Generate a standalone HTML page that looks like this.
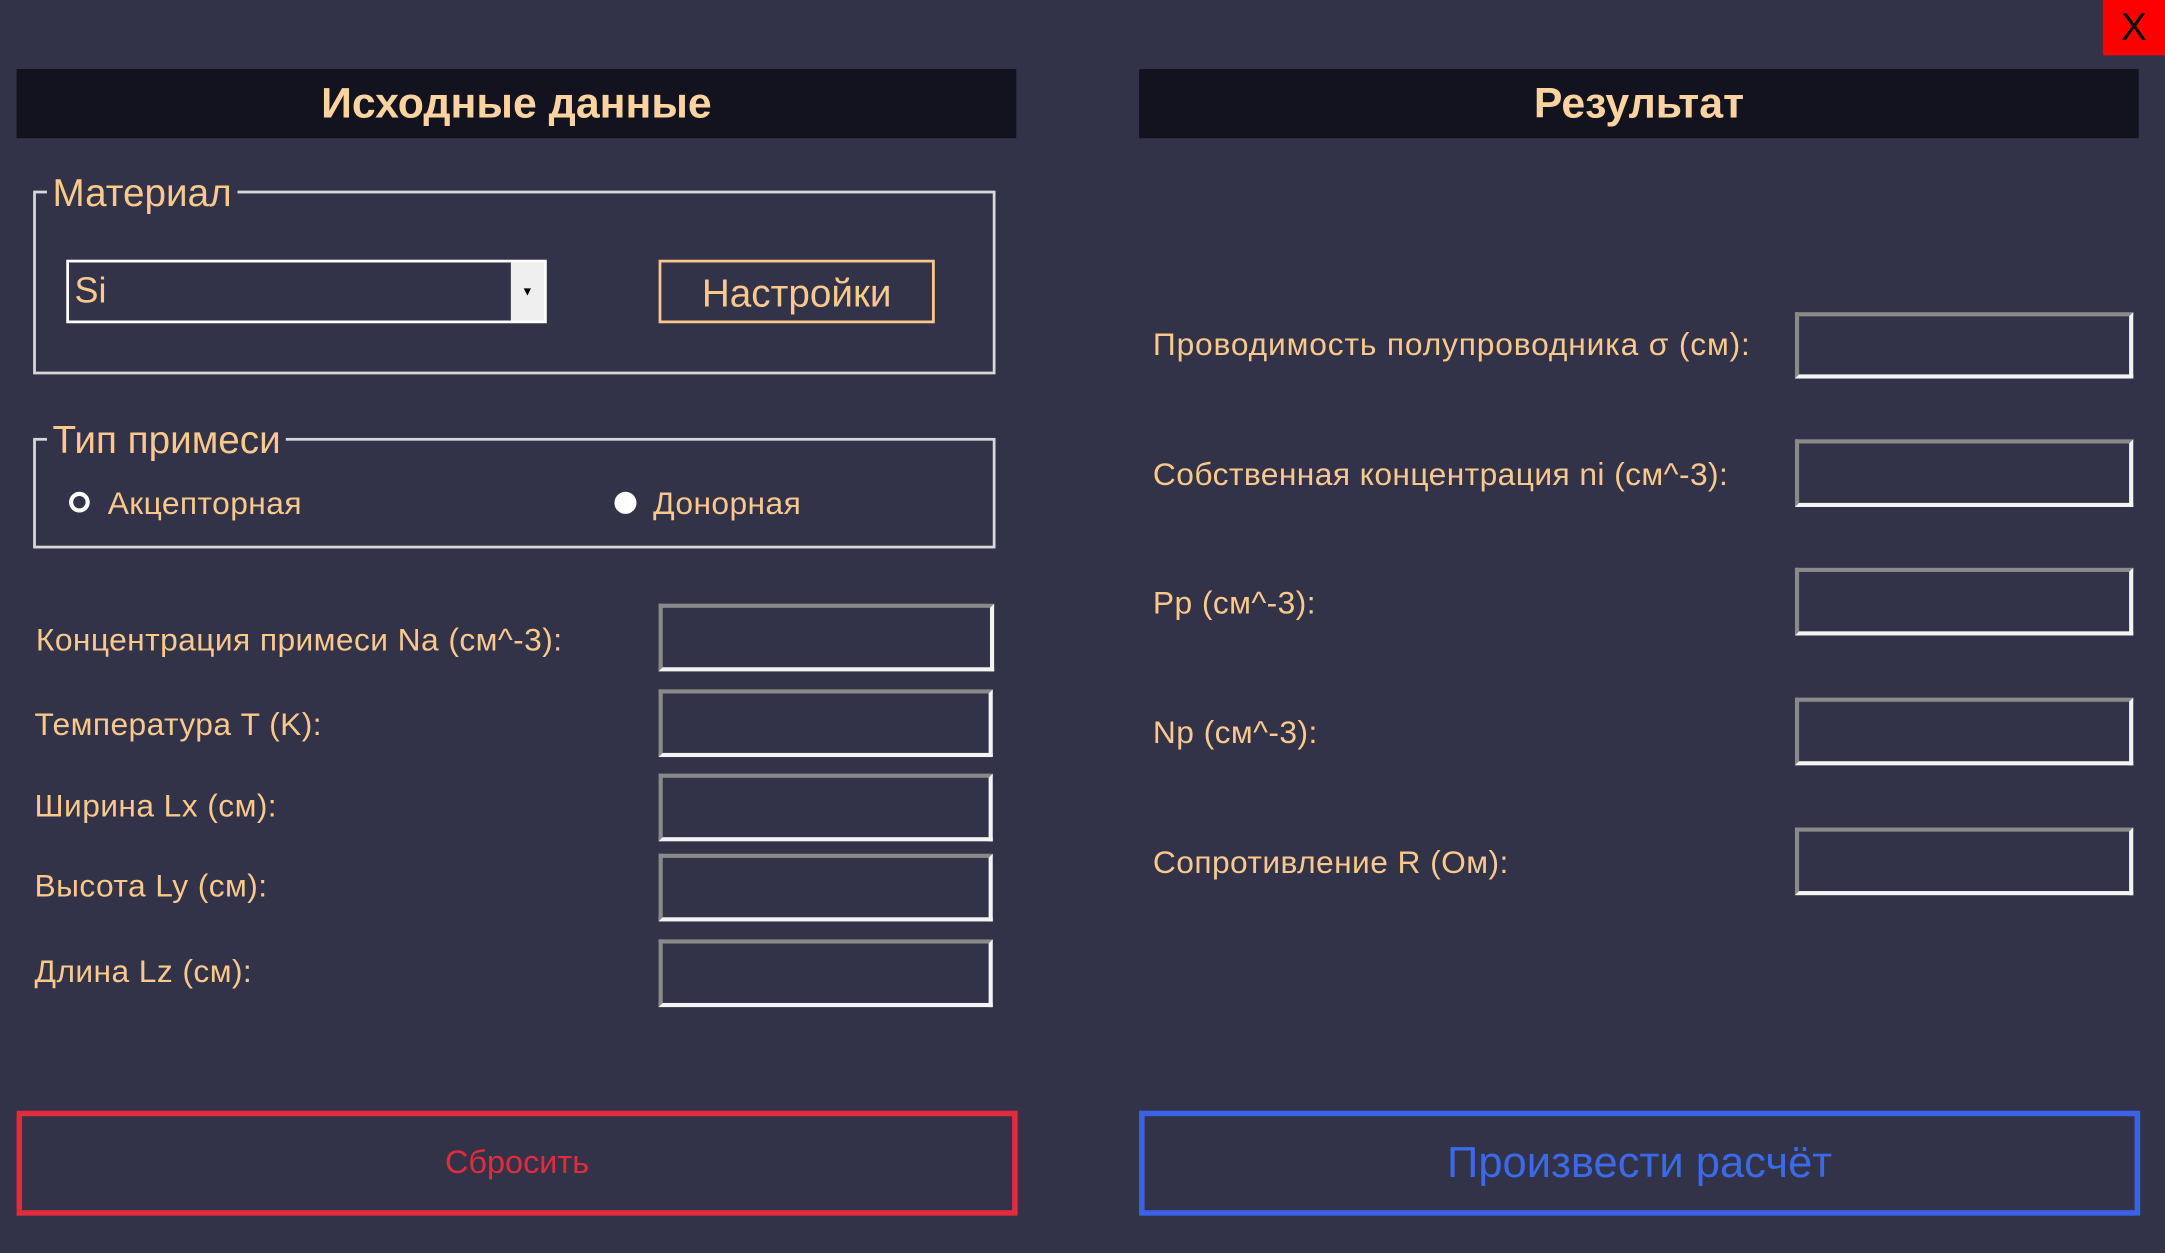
<!DOCTYPE html>
<html><head><meta charset="utf-8"><style>
html,body{margin:0;padding:0;background:#323248;overflow:hidden;width:2165px;height:1253px}
#w{position:absolute;left:0;top:0;width:1568px;height:907px;transform:scale(1.38074,1.38148);transform-origin:0 0;font-family:"Liberation Sans",sans-serif;color:#f9c88c}
.a{position:absolute;box-sizing:border-box}
.hdr{background:#13131f;font-weight:bold;font-size:31px;text-align:center;line-height:50px;color:#fbd3a0}
.grp{border:2px solid #d8d8d8}
.leg{background:#323248;padding:0 4px;font-size:28px;line-height:28px}
.lbl{font-size:23px;letter-spacing:0.3px;line-height:24px;white-space:nowrap}
.inp{border:3px solid;border-color:#8a8a8a #f4f4f4 #f4f4f4 #8a8a8a;background:#323248}
</style></head><body><div id="w">
<div class="a" style="left:1523px;top:0;width:45px;height:40px;background:#ff0000;color:#000;font-size:28px;text-align:center;line-height:40px">X</div>
<div class="a hdr" style="left:12px;top:50px;width:724px;height:50px">Исходные данные</div>
<div class="a hdr" style="left:825px;top:50px;width:724px;height:50px">Результат</div>

<div class="a grp" style="left:24px;top:138px;width:697px;height:133px"></div>
<div class="a leg" style="left:34px;top:126px">Материал</div>
<div class="a" style="left:48px;top:188px;width:348px;height:46px;border:2px solid #fff;background:#323248"></div>
<div class="a" style="left:370px;top:190px;width:24px;height:42px;background:#efefef;color:#000;font-size:9px;text-align:center;line-height:42px">▼</div>
<div class="a" style="left:54px;top:196px;font-size:26px;line-height:28px">Si</div>
<div class="a" style="left:477px;top:188px;width:200px;height:46px;border:2px solid #f9c88c;font-size:28px;text-align:center;line-height:46px">Настройки</div>

<div class="a grp" style="left:24px;top:317px;width:697px;height:80px"></div>
<div class="a leg" style="left:34px;top:305px">Тип примеси</div>
<div class="a" style="left:50px;top:356px;width:15px;height:15px;border:3px solid #fff;border-radius:50%"></div>
<div class="a lbl" style="left:78px;top:352px">Акцепторная</div>
<div class="a" style="left:445px;top:356px;width:16px;height:16px;background:#fff;border-radius:50%"></div>
<div class="a lbl" style="left:473px;top:352px">Донорная</div>

<div class="a lbl" style="left:26px;top:451px">Концентрация примеси Na (см^-3):</div>
<div class="a lbl" style="left:25px;top:512px">Температура T (K):</div>
<div class="a lbl" style="left:25px;top:571px">Ширина Lx (см):</div>
<div class="a lbl" style="left:25px;top:629px">Высота Ly (см):</div>
<div class="a lbl" style="left:25px;top:691px">Длина Lz (см):</div>
<div class="a inp" style="left:477px;top:437px;width:243px;height:49px"></div>
<div class="a inp" style="left:477px;top:499px;width:242px;height:49px"></div>
<div class="a inp" style="left:477px;top:560px;width:242px;height:49px"></div>
<div class="a inp" style="left:477px;top:618px;width:242px;height:49px"></div>
<div class="a inp" style="left:477px;top:680px;width:242px;height:49px"></div>

<div class="a lbl" style="left:835px;top:237px;letter-spacing:0.6px">Проводимость полупроводника σ (см):</div>
<div class="a lbl" style="left:835px;top:331px">Собственная концентрация ni (см^-3):</div>
<div class="a lbl" style="left:835px;top:424px">Pp (см^-3):</div>
<div class="a lbl" style="left:835px;top:518px">Np (см^-3):</div>
<div class="a lbl" style="left:835px;top:612px">Сопротивление R (Ом):</div>
<div class="a inp" style="left:1300px;top:226px;width:245px;height:48px"></div>
<div class="a inp" style="left:1300px;top:318px;width:245px;height:49px"></div>
<div class="a inp" style="left:1300px;top:411px;width:245px;height:49px"></div>
<div class="a inp" style="left:1300px;top:505px;width:245px;height:49px"></div>
<div class="a inp" style="left:1300px;top:599px;width:245px;height:49px"></div>

<div class="a" style="left:12px;top:804px;width:725px;height:76px;border:4.5px solid #e22b3c;color:#e22b3c;font-size:23.5px;text-align:center;line-height:67px">Сбросить</div>
<div class="a" style="left:825px;top:804px;width:725px;height:76px;border:4.5px solid #3b62e6;color:#3b6ae6;font-size:31.5px;text-align:center;line-height:67px">Произвести расчёт</div>
</div></body></html>
